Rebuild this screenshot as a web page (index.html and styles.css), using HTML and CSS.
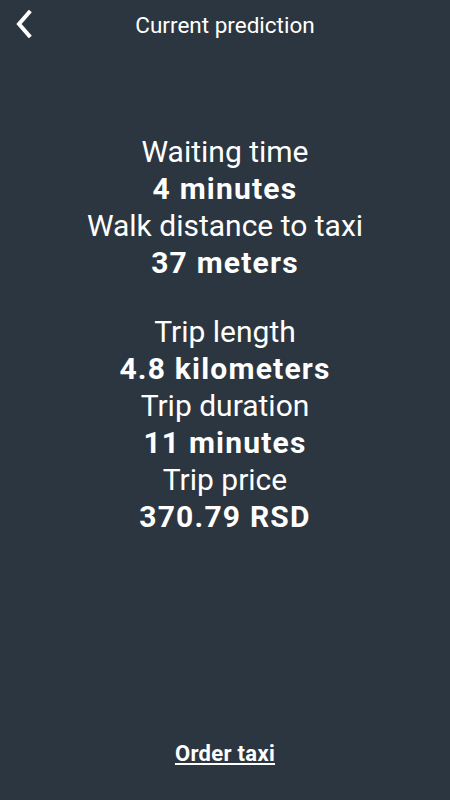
FILE: index.html
```html
<!DOCTYPE html>
<html lang="en">
  <head>
    <meta charset="UTF-8" />
    <meta name="viewport" content="width=device-width, initial-scale=1.0" />
    <title>Current prediction</title>
    <link rel="stylesheet" href="styles.css">
  </head>
  <body>
    <div class="toolbar">
      <button class="back-button" aria-label="Back">
        <svg width="20" height="28" viewBox="0 0 20 28">
          <path d="M15 2.5 L5 14 L15 25.5" fill="none" stroke="#fff" stroke-width="4" stroke-linecap="square" />
        </svg>
      </button>
      <div class="title">Current prediction</div>
    </div>

    <div class="prediction">
      <div class="group">
        <div class="label">Waiting time</div>
        <div class="value">4 minutes</div>
        <div class="label">Walk distance to taxi</div>
        <div class="value">37 meters</div>
      </div>
      <div class="group">
        <div class="label">Trip length</div>
        <div class="value">4.8 kilometers</div>
        <div class="label">Trip duration</div>
        <div class="value">11 minutes</div>
        <div class="label">Trip price</div>
        <div class="value">370.79 RSD</div>
      </div>
    </div>

    <div class="footer">
      <a class="order-link" href="#">Order taxi</a>
    </div>
  </body>
</html>
```

FILE: styles.css
```css
body {
  margin: 0;
  height: 800px;
  background: #2c3640;
  color: #ffffff;
  font-family: Roboto, "Noto Sans", sans-serif;
  display: flex;
  flex-direction: column;
  overflow: hidden;
}

.toolbar {
  height: 48px;
  display: flex;
  align-items: center;
  justify-content: center;
  position: relative;
}

.back-button {
  position: absolute;
  left: 14px;
  top: 10px;
  background: none;
  border: none;
  padding: 0;
  cursor: pointer;
}

.title {
  font-size: 22.5px;
  margin-top: 1px;
}

.prediction {
  margin-top: 85px;
  display: flex;
  flex-direction: column;
  gap: 32px;
  text-align: center;
  font-size: 30px;
  line-height: 37px;
}

.value {
  font-weight: bold;
  letter-spacing: 1.2px;
}

.footer {
  margin-top: auto;
  padding-bottom: 34px;
  text-align: center;
}

.order-link {
  color: #ffffff;
  font-size: 22px;
  font-weight: bold;
  letter-spacing: 0.3px;
}
```
